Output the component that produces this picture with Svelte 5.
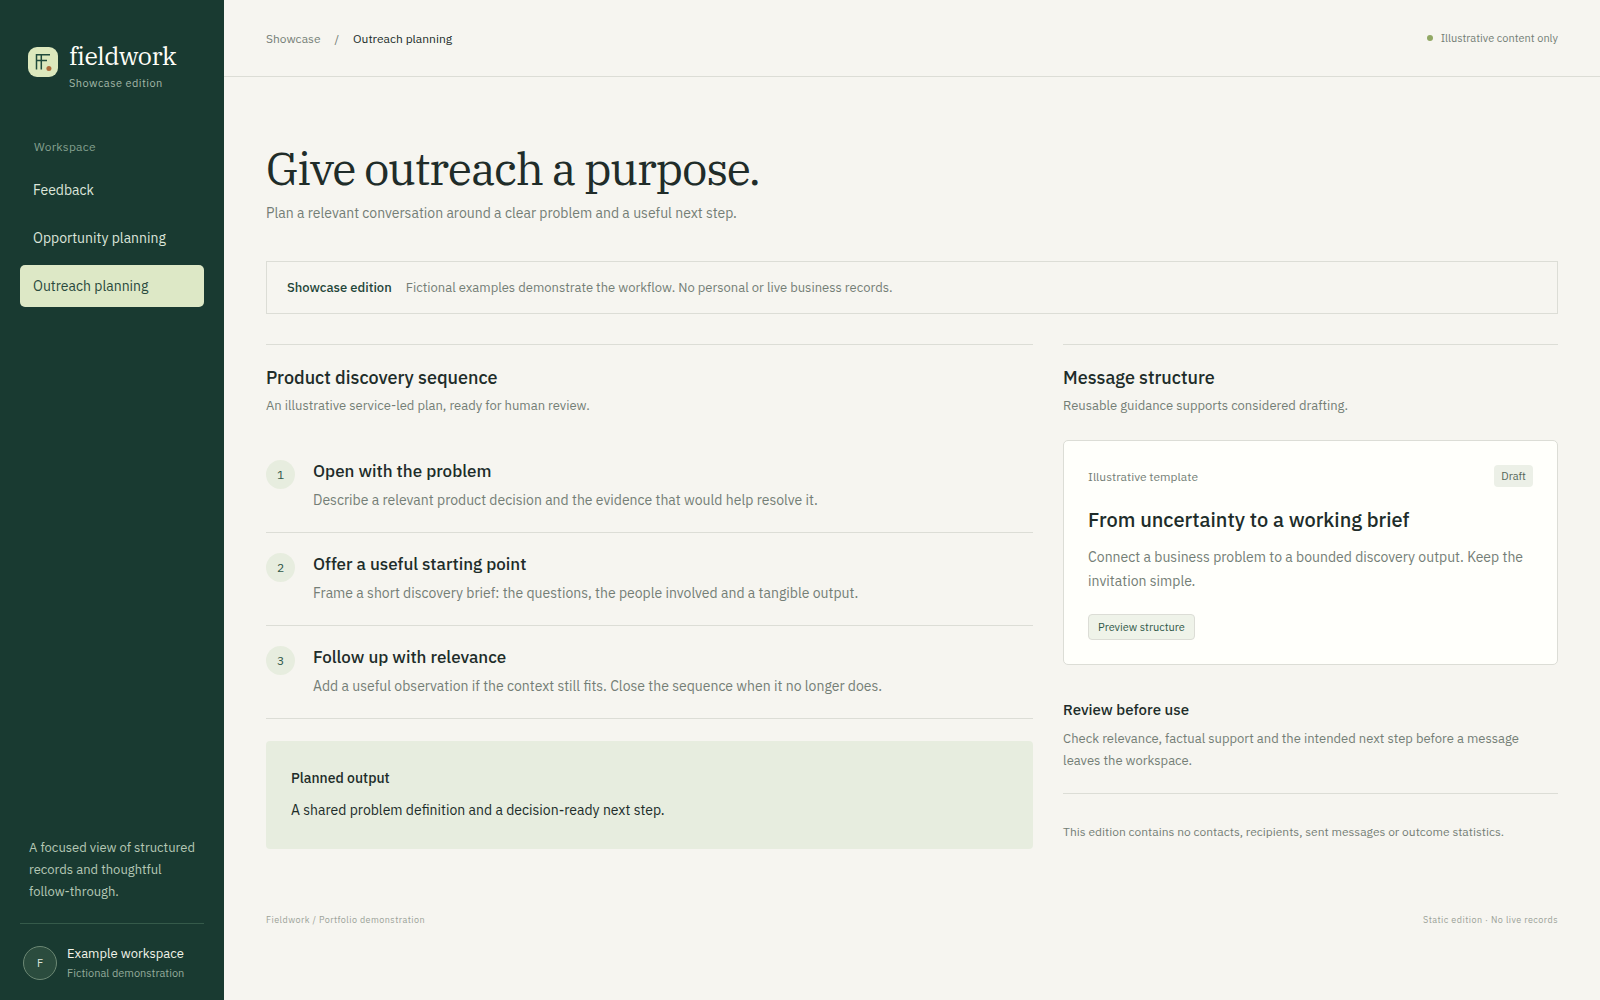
<script lang="ts">

	interface NavItem {
		id: string
		label: string
	}

	interface Step {
		title: string
		text: string
	}

	const navItems: NavItem[] = [
		{ id: "feedback", label: "Feedback" },
		{ id: "opportunity", label: "Opportunity planning" },
		{ id: "outreach", label: "Outreach planning" },
	];

	const steps: Step[] = [
		{
			title: "Open with the problem",
			text: "Describe a relevant product decision and the evidence that would help resolve it.",
		},
		{
			title: "Offer a useful starting point",
			text: "Frame a short discovery brief: the questions, the people involved and a tangible output.",
		},
		{
			title: "Follow up with relevance",
			text: "Add a useful observation if the context still fits. Close the sequence when it no longer does.",
		},
	];

	// The page that is open right now
	let current = $state("outreach");

</script>

<div class="shell">
	<aside class="sidebar">
		<div class="brand">
			<svg class="mark" viewBox="0 0 30 30" aria-hidden="true">
				<rect width="30" height="30" rx="9" fill="#dce8bd" />
				<path d="M8.5 22.5V7.7H22M13.3 22.5V7.7M8.5 13.6H19" fill="none" stroke="#1f4a3c" stroke-width="1.5" />
				<circle cx="20.9" cy="21.6" r="2.5" fill="#ad6b3b" />
			</svg>
			<div>
				<div class="wordmark">fieldwork</div>
				<div class="edition">Showcase edition</div>
			</div>
		</div>

		<nav aria-label="Workspace">
			<p class="nav-title">Workspace</p>
			{#each navItems as item}
				<a
					href="#{item.id}"
					class:active={current === item.id}
					onclick={() => current = item.id}
				>{item.label}</a>
			{/each}
		</nav>

		<p class="tagline">A focused view of structured records and thoughtful follow-through.</p>

		<div class="account">
			<span class="avatar">F</span>
			<div>
				<div class="account-name">Example workspace</div>
				<div class="account-note">Fictional demonstration</div>
			</div>
		</div>
	</aside>

	<div class="page">
		<header>
			<nav class="crumbs" aria-label="Breadcrumb">
				<a href="#showcase">Showcase</a>
				<span>/</span>
				<span class="here">Outreach planning</span>
			</nav>
			<div class="status"><i></i>Illustrative content only</div>
		</header>

		<main>
			<h1>Give outreach a purpose.</h1>
			<p class="lead">Plan a relevant conversation around a clear problem and a useful next step.</p>

			<div class="notice">
				<strong>Showcase edition</strong>
				<span>Fictional examples demonstrate the workflow. No personal or live business records.</span>
			</div>

			<div class="columns">
				<section>
					<h2>Product discovery sequence</h2>
					<p class="sub">An illustrative service-led plan, ready for human review.</p>

					<ol>
						{#each steps as step, i}
							<li>
								<span class="number">{i + 1}</span>
								<div>
									<h3>{step.title}</h3>
									<p>{step.text}</p>
								</div>
							</li>
						{/each}
					</ol>

					<div class="output">
						<h4>Planned output</h4>
						<p>A shared problem definition and a decision-ready next step.</p>
					</div>
				</section>

				<section>
					<h2>Message structure</h2>
					<p class="sub">Reusable guidance supports considered drafting.</p>

					<article>
						<div class="card-top">
							<span>Illustrative template</span>
							<span class="badge">Draft</span>
						</div>
						<h3>From uncertainty to a working brief</h3>
						<p>Connect a business problem to a bounded discovery output. Keep the invitation simple.</p>
						<button type="button">Preview structure</button>
					</article>

					<div class="review">
						<h4>Review before use</h4>
						<p>Check relevance, factual support and the intended next step before a message leaves the workspace.</p>
					</div>
					<p class="disclaimer">This edition contains no contacts, recipients, sent messages or outcome statistics.</p>
				</section>
			</div>

			<footer>
				<span>Fieldwork / Portfolio demonstration</span>
				<span>Static edition · No live records</span>
			</footer>
		</main>
	</div>
</div>

<style>
	:global(body) {
		background: #f6f5f0;
		color: #202c29;
		font-family: "IBM Plex Sans", Roboto, sans-serif;
		font-size: 14px;
	}

	h1, h2, h3, h4, p, ol {
		margin: 0;
		padding: 0;
		font-weight: 400;
	}

	h2, h3, h4, strong {
		font-weight: 500;
	}

	a {
		color: inherit;
		text-decoration: none;
	}

	.shell {
		display: grid;
		grid-template-columns: 224px minmax(0, 1fr);
		min-height: 100vh;
	}

	/* Sidebar */
	.sidebar {
		display: flex;
		flex-direction: column;
		box-sizing: border-box;
		padding: 40px 20px 18px;
		background: #193a31;
		color: #dce5da;
	}

	.brand {
		display: flex;
		gap: 11px;
		padding: 0 8px;
	}

	.mark {
		width: 30px;
		height: 30px;
		margin-top: 7px;
	}

	.wordmark {
		color: #fffef8;
		font-family: "IBM Plex Serif", "Liberation Serif", serif;
		font-size: 25px;
		letter-spacing: -0.02em;
		line-height: 32px;
	}

	.edition {
		margin-top: 2px;
		color: #a3b8a8;
		font-size: 11px;
		letter-spacing: 0.04em;
		line-height: 18px;
	}

	.sidebar nav {
		display: flex;
		flex-direction: column;
		gap: 6px;
		margin-top: 46px;
	}

	.nav-title {
		padding: 0 14px;
		margin-bottom: 7px;
		color: #84a08f;
		font-size: 12px;
		letter-spacing: 0.02em;
		line-height: 18px;
	}

	.sidebar nav a {
		padding: 10px 13px;
		border-radius: 5px;
		font-size: 14px;
		line-height: 22px;
	}

	.sidebar nav a.active {
		background: #dde8c6;
		color: #294a3d;
	}

	.tagline {
		margin-top: auto;
		margin-bottom: 20px;
		padding: 0 9px 20px;
		border-bottom: 1px solid #355a4a;
		color: #b5c8b5;
		font-size: 13px;
		line-height: 22px;
	}

	.account {
		display: flex;
		align-items: center;
		gap: 10px;
		padding: 0 3px;
	}

	.avatar {
		display: grid;
		place-items: center;
		box-sizing: border-box;
		width: 34px;
		height: 34px;
		border: 1px solid #6c8874;
		border-radius: 50%;
		background: #2b4c3e;
		font-size: 11px;
	}

	.account-name {
		color: #f2f4e9;
		font-size: 13px;
		line-height: 20px;
	}

	.account-note {
		color: #94ab9b;
		font-size: 11px;
		line-height: 18px;
	}

	/* Top bar */
	header {
		display: flex;
		align-items: center;
		justify-content: space-between;
		height: 76px;
		padding: 0 42px;
		border-bottom: 1px solid #dcddd6;
		color: #747e76;
		font-size: 12px;
	}

	.crumbs {
		display: flex;
		gap: 14px;
	}

	.here {
		color: #202c29;
	}

	.status {
		display: flex;
		align-items: center;
		gap: 8px;
		font-size: 11px;
	}

	.status i {
		width: 6px;
		height: 6px;
		border-radius: 50%;
		background: #91a864;
	}

	/* Content */
	main {
		padding: 62px 42px 40px;
	}

	h1 {
		font-family: "IBM Plex Serif", "Liberation Serif", serif;
		font-size: 45px;
		letter-spacing: -0.03em;
		line-height: 58px;
	}

	.lead {
		margin-top: 5px;
		color: #747e76;
		font-size: 14px;
		line-height: 22px;
	}

	.notice {
		display: flex;
		gap: 14px;
		margin-top: 37px;
		padding: 15px 20px;
		border: 1px solid #dcddd6;
		color: #747e76;
		font-size: 13px;
		line-height: 21px;
	}

	.notice strong {
		color: #1f4539;
	}

	.columns {
		display: grid;
		grid-template-columns: 155fr 100fr;
		gap: 30px;
		margin-top: 30px;
	}

	section {
		min-width: 0;
		padding-top: 20px;
		border-top: 1px solid #dcddd6;
	}

	h2 {
		font-size: 18px;
		line-height: 26px;
	}

	.sub {
		margin-top: 5px;
		color: #747e76;
		font-size: 13px;
		line-height: 20px;
	}

	ol {
		margin-top: 24px;
		list-style: none;
	}

	li {
		display: flex;
		gap: 18px;
		padding: 19px 0 20px;
		border-bottom: 1px solid #dcddd6;
	}

	li p {
		margin-top: 5px;
		color: #747e76;
		line-height: 24px;
	}

	li h3 {
		font-size: 17px;
		line-height: 24px;
	}

	.number {
		display: grid;
		flex: none;
		place-items: center;
		width: 29px;
		height: 29px;
		margin-top: 1px;
		border-radius: 50%;
		background: #e7eddf;
		color: #31594a;
		font-size: 12px;
	}

	.output {
		margin-top: 22px;
		padding: 26px 25px;
		border-radius: 4px;
		background: #e7eddf;
	}

	.output h4 {
		font-size: 14px;
		line-height: 22px;
	}

	.output p {
		margin-top: 8px;
		line-height: 26px;
	}

	article {
		margin-top: 24px;
		padding: 24px;
		border: 1px solid #dcddd6;
		border-radius: 5px;
		background: #fffffb;
	}

	.card-top {
		display: flex;
		align-items: center;
		justify-content: space-between;
		color: #747e76;
		font-size: 12px;
	}

	.badge {
		padding: 2px 7px;
		border-radius: 4px;
		background: #ecf0e7;
		color: #55675a;
		font-size: 11px;
		line-height: 18px;
	}

	article h3 {
		margin-top: 18px;
		font-size: 20px;
		line-height: 30px;
	}

	article p {
		margin-top: 10px;
		color: #747e76;
		line-height: 24px;
	}

	button {
		display: block;
		margin-top: 21px;
		padding: 3px 9px;
		border: 1px solid #dcddd6;
		border-radius: 4px;
		background: #eff3e9;
		color: #31594a;
		font: inherit;
		font-size: 11px;
		line-height: 18px;
	}

	.review {
		margin-top: 33px;
		padding-bottom: 21px;
		border-bottom: 1px solid #dcddd6;
	}

	.review h4 {
		font-size: 15px;
		line-height: 24px;
	}

	.review p {
		margin-top: 6px;
		color: #747e76;
		font-size: 13px;
		line-height: 22px;
	}

	.disclaimer {
		margin-top: 28px;
		color: #747e76;
		font-size: 12px;
		line-height: 20px;
	}

	footer {
		display: flex;
		justify-content: space-between;
		margin-top: 62px;
		color: #9ba298;
		font-size: 9px;
		letter-spacing: 0.05em;
		line-height: 18px;
	}
</style>
